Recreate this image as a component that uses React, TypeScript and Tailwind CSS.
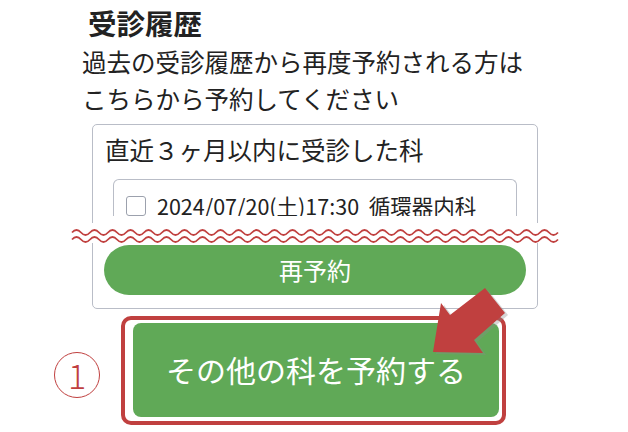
import React from "react";

const RED = "#c0403f";

// 折れ線の省略記号（波線）
function wavePath(y: number) {
  let d = `M72 ${y} q4.5 -5 9 0`;
  for (let i = 0; i < 53; i++) d += " t9 0";
  return d;
}

export default function App() {
  return (
    <div
      className="relative w-[628px] h-[432px] overflow-hidden bg-white text-[#222]"
      style={{ fontFamily: '"Noto Sans CJK JP", "Noto Sans", sans-serif' }}
    >
      <h2 className="ml-[88px] pt-[3px] text-[28.5px] font-bold leading-[40px]">受診履歴</h2>
      <p className="ml-[82px] text-[24.5px] leading-[37px]">
        過去の受診履歴から再度予約される方は
        <br />
        こちらから予約してください
      </p>

      {/* 受診履歴ボックス */}
      <div className="ml-[92px] mt-[7px] w-[446px] rounded-[5px] border border-[#b9bdc7] px-[11px] pb-[13px]">
        <div className="pl-[1px] pt-[10px] text-[24.5px] leading-[30px]">直近３ヶ月以内に受診した科</div>
        <div className="mx-[9px] mt-[14px] h-[37px] overflow-hidden rounded-t-[6px] border border-b-0 border-[#b9bdc7]">
          <div className="flex items-center gap-[11px] pl-[12px] pt-[16px]">
            <span className="block h-[20px] w-[20px] shrink-0 rounded-[3px] border border-[#9ca1ad] bg-white" />
            <span className="text-[21.5px] leading-[20px] whitespace-pre">2024/07/20(土)17:30  循環器内科</span>
          </div>
        </div>
        <button className="mt-[29px] flex h-[50px] w-full items-center justify-center rounded-full bg-[#60a957] text-[24px] text-white">
          再予約
        </button>
      </div>

      {/* その他の科 */}
      <div className="mt-[7px] flex items-center">
        <div className="ml-[54px] mt-[8px] flex h-[46px] w-[46px] items-center justify-center rounded-full border-[1.5px] border-[#c0403f] text-[34px] font-light leading-none text-[#c0403f]">
          1
        </div>
        <div className="ml-[21px] h-[109px] w-[385px] rounded-[10px] border-4 border-[#c0403f] pb-[4px] pl-[8px] pr-[3px] pt-[3px]">
          <button className="flex h-full w-full items-center justify-center rounded-[8px] bg-[#60a957] pb-[2px] text-[30px] text-white">
            その他の科を予約する
          </button>
        </div>
      </div>

      {/* 注釈の重ね描き */}
      <svg className="pointer-events-none absolute left-0 top-0" width="628" height="432" viewBox="0 0 628 432">
        <rect x="70" y="223" width="492" height="20" fill="#fff" />
        <path d={wavePath(232.5)} fill="none" stroke={RED} strokeWidth="1.8" />
        <path d={wavePath(239.5)} fill="none" stroke={RED} strokeWidth="1.8" />
        <polygon
          points="436,354 444,305 453,317 488,290 508,315 477,342 486,355"
          fill="#8a8a8a"
          opacity="0.35"
        />
        <polygon points="433,352 441,303 450,315 485,288 505,313 474,340 483,353" fill={RED} />
      </svg>
    </div>
  );
}
